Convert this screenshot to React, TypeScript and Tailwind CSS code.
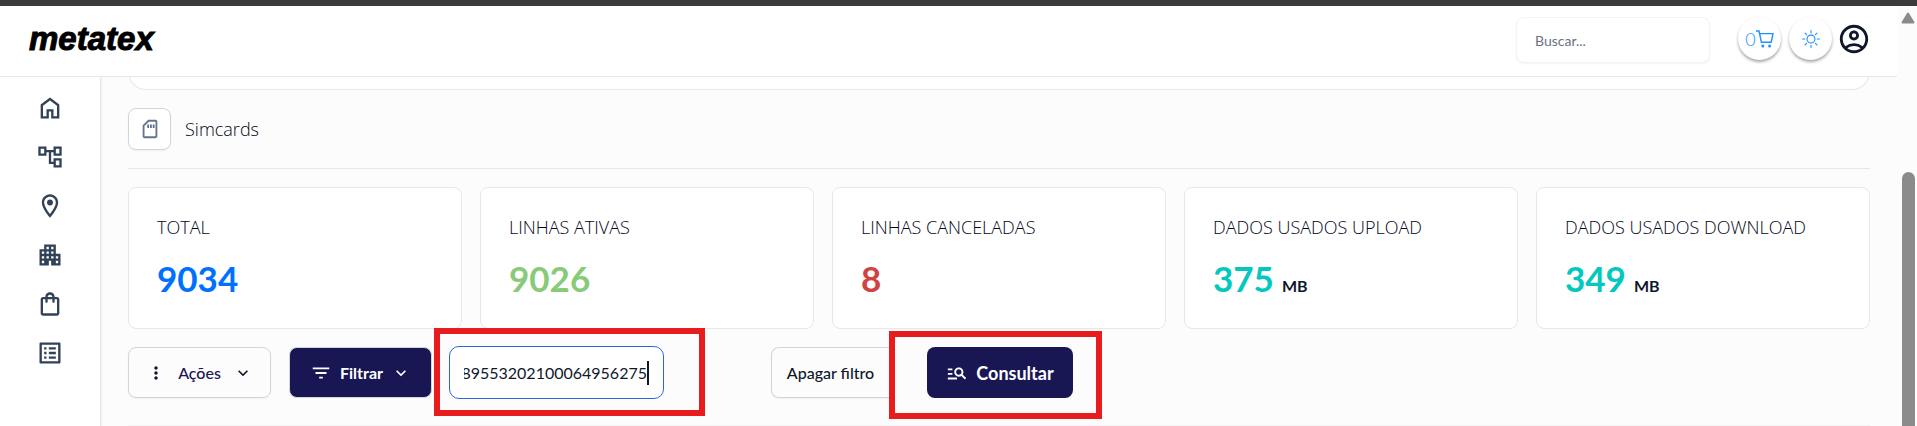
import { useState } from "react";
import { BsSun } from "react-icons/bs";
import {
    MdApartment,
    MdFilterList,
    MdKeyboardArrowDown,
    MdListAlt,
    MdManageSearch,
    MdMoreVert,
    MdOutlineAccountCircle,
    MdOutlineAccountTree,
    MdOutlineLocationOn,
    MdOutlineSdCard,
    MdOutlineShoppingBag
} from "react-icons/md";

const HomeIcon = () => (
    <svg viewBox="0 -960 960 960" width="28" height="28" fill="currentColor" aria-hidden="true">
        <path d="M240-200h120v-240h240v240h120v-360L480-740 240-560v360Zm-80 80v-480l320-240 320 240v480H520v-240h-80v240H160Z" />
    </svg>
);

const CartIcon = () => (
    <svg viewBox="0 0 18 18" width="18" height="18" fill="none" stroke="currentColor" strokeWidth="1.4" aria-hidden="true">
        <path d="M0 1h3l2.4 11.2h9.8L17 3.6H3.6" />
        <circle cx="6.8" cy="16" r="1.5" fill="currentColor" stroke="none" />
        <circle cx="13.6" cy="16" r="1.5" fill="currentColor" stroke="none" />
    </svg>
);

const links = [
    { label: "Início", icon: <HomeIcon /> },
    { label: "Estrutura", icon: <MdOutlineAccountTree size={28} /> },
    { label: "Localização", icon: <MdOutlineLocationOn size={28} /> },
    { label: "Empresas", icon: <MdApartment size={28} /> },
    { label: "Pedidos", icon: <MdOutlineShoppingBag size={28} /> },
    { label: "Relatórios", icon: <MdListAlt size={28} /> },
];

const stats = [
    { label: "TOTAL", value: "9034", color: "text-[#0070ff]" },
    { label: "LINHAS ATIVAS", value: "9026", color: "text-[#87cb78]" },
    { label: "LINHAS CANCELADAS", value: "8", color: "text-[#d04343]" },
    { label: "DADOS USADOS UPLOAD", value: "375", unit: "MB", color: "text-[#04c8be]" },
    { label: "DADOS USADOS DOWNLOAD", value: "349", unit: "MB", color: "text-[#04c8be]" },
];

const Header = () => (
    <header className="relative z-10 flex h-[71px] shrink-0 items-start justify-between border-b border-gray-200 bg-white pt-[11px] pr-[26px] pl-[29px]">
        <a href="#" className="font-['Liberation_Sans'] text-[33px] leading-[44px] font-bold text-black italic [-webkit-text-stroke:1px_black]">
            metatex
        </a>
        <div className="flex items-start">
            <input
                type="search"
                aria-label="Buscar"
                placeholder="Buscar..."
                className="mr-7 h-[46px] w-[194px] rounded-lg border border-gray-100 bg-white px-[18px] text-sm shadow-xs placeholder:text-gray-500"
            />
            <button aria-label="Carrinho" className="mr-2 flex size-[43px] items-center justify-center rounded-full bg-white text-lg font-light text-[#1e90ff] shadow-[0_2px_3px_rgba(0,0,0,0.35)]">
                0<CartIcon />
            </button>
            <button aria-label="Tema" className="mr-[5px] flex size-[43px] items-center justify-center rounded-full bg-white text-[#1e90ff] shadow-[0_2px_3px_rgba(0,0,0,0.35)]">
                <BsSun size={18} />
            </button>
            <button aria-label="Conta" className="flex h-[43px] items-center text-slate-900">
                <MdOutlineAccountCircle size={34} />
            </button>
        </div>
    </header>
);

const SideBar = () => (
    <nav className="flex w-[101px] shrink-0 flex-col items-center gap-[21px] border-r border-gray-200 bg-white pt-[17px] text-slate-700 shadow-sm">
        {links.map((link) => (
            <a key={link.label} href="#" aria-label={link.label}>
                {link.icon}
            </a>
        ))}
    </nav>
);

const Stats = () => (
    <div className="grid grid-cols-5 gap-[18px]">
        {stats.map((stat) => (
            <div key={stat.label} className="h-[142px] rounded-lg border border-gray-200 bg-white px-7 pt-[25px]">
                <h2 className="font-['Open_Sans'] text-lg leading-7 font-light text-slate-950">{stat.label}</h2>
                <p className="mt-2 flex items-baseline gap-2">
                    <span className={`text-[35px] leading-[58px] font-bold ${stat.color}`}>{stat.value}</span>
                    {stat.unit && <span className="text-base font-bold">{stat.unit}</span>}
                </p>
            </div>
        ))}
    </div>
);

const Filters = () => {
    const [iccid, setIccid] = useState("89553202100064956275");

    return (
        <div className="-mt-px flex items-start">
            <button className="mt-[19px] flex h-[51px] w-[143px] items-center justify-center gap-3 rounded-lg border border-gray-300 text-base font-medium text-[#191654] shadow-xs">
                <MdMoreVert size={20} className="text-slate-900" />
                Ações
                <MdKeyboardArrowDown size={20} className="text-slate-900" />
            </button>
            <button className="mt-[19px] ml-[18px] flex h-[51px] w-[143px] items-center justify-center gap-2 rounded-lg border border-gray-300 bg-[#191654] text-base font-bold text-white">
                <MdFilterList size={22} />
                Filtrar
                <MdKeyboardArrowDown size={20} />
            </button>
            <div className="ml-[2px] h-[88px] w-[271px] border-6 border-[#e81c1c] pt-3 pl-[9px]">
                <div className="flex h-[53px] w-[215px] items-center rounded-[10px] border border-[#2b66e0] bg-white px-[14px]">
                    <div className="flex flex-1 justify-end overflow-hidden">
                        <input
                            aria-label="ICCID"
                            value={iccid}
                            onChange={(e) => setIccid(e.target.value)}
                            className="w-[196px] shrink-0 border-r-2 border-slate-900 bg-transparent text-right text-base outline-none"
                        />
                    </div>
                </div>
            </div>
            <button className="mt-[19px] ml-[66px] h-[51px] w-[118px] rounded-l-lg border border-r-0 border-gray-300 text-base font-medium shadow-xs">
                Apagar filtro
            </button>
            <div className="mt-[3px] flex h-[88px] w-[213px] border-6 border-[#e81c1c] pt-[10px] pl-8">
                <button className="flex h-[51px] w-[146px] items-center justify-center gap-2 rounded-lg bg-[#191654] text-lg font-bold text-white">
                    <MdManageSearch size={22} />
                    Consultar
                </button>
            </div>
        </div>
    );
};

const ScrollBar = () => (
    <div className="flex w-5 shrink-0 flex-col items-center bg-[#fcfcfc] pt-1.5 pl-0.5" aria-hidden="true">
        <svg width="14" height="12" viewBox="0 0 14 12" fill="#8b8b8b">
            <path d="M7 1.5 12.5 10.5H1.5Z" stroke="#8b8b8b" strokeWidth="2" strokeLinejoin="round" />
        </svg>
        <div className="mt-[148px] w-[13px] flex-1 rounded-t-full bg-[#8b8b8b]" />
    </div>
);

export default function App() {
    return (
        <div className="flex h-screen flex-col overflow-hidden bg-[#fcfcfc] font-['Lato',sans-serif] text-slate-900">
            <div className="h-1.5 shrink-0 bg-[#3b3b3b]" />
            <div className="flex min-h-0 flex-1">
                <div className="flex min-w-0 flex-1 flex-col">
                    <Header />
                    <div className="flex min-h-0 flex-1">
                        <SideBar />
                        <main className="min-w-0 flex-1 pr-[27px] pl-[27px]">
                            <div className="-mt-4 h-[29px] rounded-b-[18px] border border-t-0 border-gray-200 bg-white" />
                            <div className="flex items-center gap-[14px] border-b border-gray-200 pt-[18px] pb-[18px]">
                                <div className="flex h-[42px] w-[43px] items-center justify-center rounded-lg border border-gray-300 bg-white text-slate-500 shadow-xs">
                                    <MdOutlineSdCard size={22} />
                                </div>
                                <h1 className="font-['Open_Sans'] text-lg leading-7 font-light text-slate-950">Simcards</h1>
                            </div>
                            <div className="pt-[18px]">
                                <Stats />
                                <Filters />
                                <hr className="mt-[6px] border-gray-100" />
                            </div>
                        </main>
                    </div>
                </div>
                <ScrollBar />
            </div>
        </div>
    );
}
